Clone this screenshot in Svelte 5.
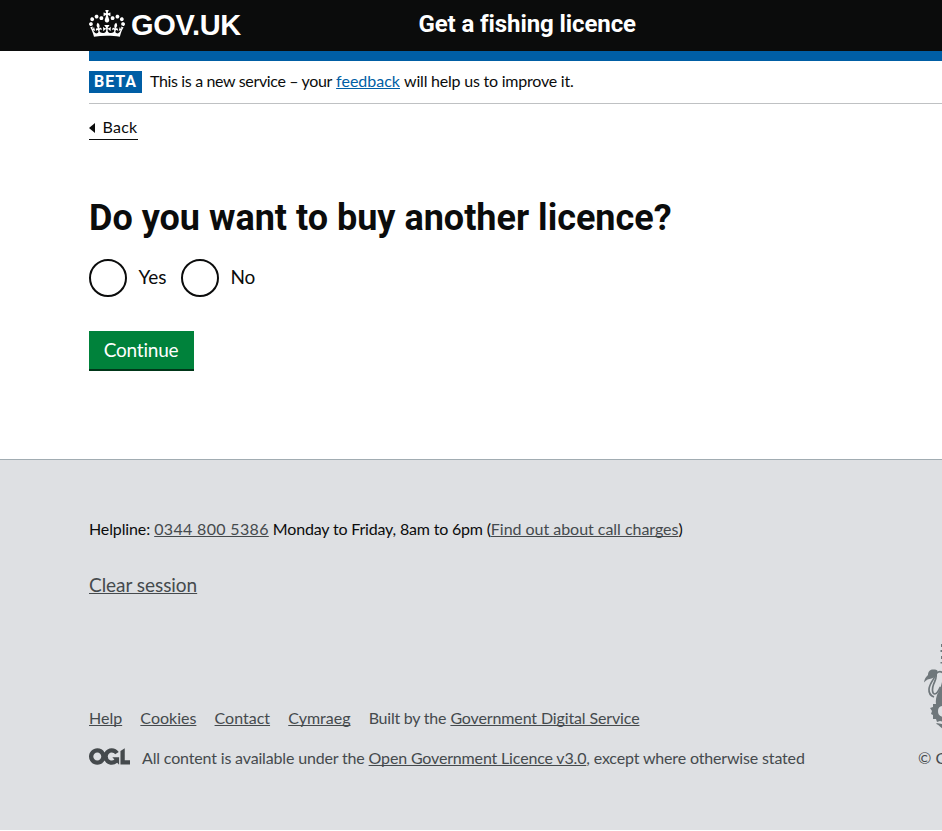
<script>
  const options = [
    { value: 'yes', label: 'Yes' },
    { value: 'no', label: 'No' }
  ];
  const links = [
    { name: 'help', label: 'Help' },
    { name: 'cookies', label: 'Cookies' },
    { name: 'contact', label: 'Contact' },
    { name: 'cymraeg', label: 'Cymraeg' }
  ];
</script>

<div class="page">
  <header>
    <a class="logo" href="#home">
      <svg class="crown" viewBox="0 0 132 97" width="36" height="27" preserveAspectRatio="none" aria-hidden="true">
        <path fill="currentColor" fill-rule="evenodd" d="M25 30.2c3.5 1.5 7.7-.2 9.1-3.7 1.5-3.6-.2-7.8-3.9-9.2-3.6-1.4-7.6.3-9.1 3.9-1.4 3.5.3 7.5 3.9 9zM9 39.5c3.6 1.5 7.8-.2 9.2-3.7 1.5-3.6-.2-7.8-3.9-9.1-3.6-1.5-7.6.2-9.1 3.8-1.4 3.5.3 7.5 3.8 9zM4.4 57.2c3.5 1.5 7.7-.2 9.1-3.8 1.5-3.6-.2-7.7-3.9-9.1-3.5-1.5-7.6.3-9.1 3.8-1.4 3.5.3 7.6 3.9 9.1zm38.3-21.4c3.5 1.5 7.7-.2 9.1-3.8 1.5-3.6-.2-7.7-3.9-9.1-3.6-1.5-7.6.3-9.1 3.8-1.3 3.6.4 7.7 3.9 9.1zm64.4-5.6c-3.6 1.5-7.8-.2-9.1-3.7-1.5-3.6.2-7.8 3.8-9.2 3.6-1.4 7.7.3 9.2 3.9 1.3 3.5-.4 7.5-3.9 9zm15.9 9.3c-3.6 1.5-7.7-.2-9.1-3.7-1.5-3.6.2-7.8 3.7-9.1 3.6-1.5 7.7.2 9.2 3.8 1.5 3.5-.3 7.5-3.8 9zm4.7 17.7c-3.6 1.5-7.8-.2-9.2-3.8-1.5-3.6.2-7.7 3.9-9.1 3.6-1.5 7.7.3 9.2 3.8 1.3 3.5-.4 7.6-3.9 9.1zM89.3 35.8c-3.6 1.5-7.8-.2-9.2-3.8-1.4-3.6.2-7.7 3.9-9.1 3.6-1.5 7.7.3 9.2 3.8 1.4 3.6-.3 7.7-3.9 9.1zM69.7 17.7l8.9 4.7V9.3l-8.9 2.8c-.2-.3-.5-.6-.9-.9L72.4 0H59.6l3.5 11.2c-.3.3-.6.5-.9.9l-8.8-2.8v13.1l8.8-4.7c.3.3.6.7.9.9l-5 15.4v.1c-.2.8-.4 1.6-.4 2.4 0 4.1 3.1 7.5 7 8.1h.2c.3 0 .7.1 1 .1.4 0 .7 0 1-.1h.2c4-.6 7.1-4.1 7.1-8.1 0-.8-.1-1.7-.4-2.4V34l-5.1-15.4c.4-.2.7-.6 1-.9zM66 92.8c16.9 0 32.8 1.1 47.1 3.2 4-16.9 8.9-26.7 14-33.5l-9.6-3.4c1 4.9 1.1 7.2 0 10.2-1.5-1.4-3-4.3-4.2-8.7L108.6 76c2.8-2 5-3.2 7.5-3.3-4.4 9.4-10 11.9-13.6 11.2-4.3-.8-6.3-4.6-5.6-7.9 1-4.7 5.7-5.9 8-.5 4.3-8.7-3-11.4-7.6-8.8 7.1-7.2 7.9-13.5 2.1-21.1-8 6.1-8.1 12.3-4.5 20.8-4.7-5.4-12.1-2.5-9.5 6.2 3.4-5.2 7.9-2 7.2 3.1-.6 4.3-6.4 7.8-13.5 7.2-10.3-.9-10.9-8-11.2-13.8 2.5-.5 7.1 1.8 11 7.3L80.2 60c-4.1 4.4-8 5.3-12.3 5.4 1.4-4.4 8-11.6 8-11.6H55.5s6.4 7.2 7.9 11.6c-4.2-.1-8-1-12.3-5.4l1.4 16.4c3.9-5.5 8.5-7.7 10.9-7.3-.3 5.8-.9 12.8-11.1 13.8-7.2.6-12.9-2.9-13.5-7.2-.7-5 3.8-8.3 7.1-3.1 2.7-8.7-4.6-11.6-9.4-6.2 3.7-8.5 3.6-14.7-4.6-20.8-5.8 7.6-5 13.9 2.2 21.1-4.7-2.6-11.9.1-7.7 8.8 2.3-5.5 7.1-4.2 8.1.5.7 3.3-1.3 7.1-5.7 7.9-3.5.7-9-1.8-13.5-11.2 2.5.1 4.7 1.3 7.5 3.3l-4.7-15.4c-1.2 4.4-2.7 7.2-4.3 8.7-1.1-3-.9-5.3 0-10.2l-9.5 3.4c5 6.9 9.9 16.7 14 33.5 14.8-2.1 30.8-3.2 47.7-3.2z" />
      </svg>
      <span class="wordmark">GOV.UK</span>
    </a>
    <a class="service" href="#service">Get a fishing licence</a>
  </header>

  <div class="container">
    <div class="bar"></div>
    <div class="phase">
      <strong class="tag">BETA</strong>
      <p><span class="lead">This is a new service – your</span>{' '}<a href="#feedback">feedback</a>{' '}<span class="tail">will help us to improve it.</span></p>
    </div>

    <a class="back" href="#back">
      <svg width="6" height="10" viewBox="0 0 6 10" aria-hidden="true"><path d="M0 5 6 0v10z" fill="currentColor" /></svg>
      <span>Back</span>
    </a>

    <main>
      <h1>Do you want to buy another licence?</h1>
      <div class="radios">
        {#each options as option}
          <label class={option.value}>
            <input type="radio" name="another" value={option.value} />
            <span>{option.label}</span>
          </label>
        {/each}
      </div>
      <button type="button">Continue</button>
    </main>
  </div>

  <footer>
    <div class="inner">
      <p class="helpline"><span class="intro">Helpline:</span>{' '}<a class="phone" href="#phone">0344 800 5386</a>{' '}<span class="hours">Monday to Friday, 8am to 6pm (</span><a class="charges" href="#charges">Find out about call charges</a>)</p>
      <p class="clear"><a href="#clear">Clear session</a></p>
      <div class="meta">
        <div>
          <div class="links">
            {#each links as link}
              <a class={link.name} href="#{link.name}">{link.label}</a>
            {/each}
            <p><span class="built">Built by the</span>{' '}<a class="gds" href="#gds">Government Digital Service</a></p>
          </div>
          <div class="licence">
            <svg width="41" height="17" viewBox="0 0 483.2 195.7" aria-hidden="true">
              <path fill="currentColor" d="M421.5 142.8V.1l-50.7 32.3v161.1h112.4v-50.7zm-122.3-9.6A47.12 47.12 0 0 1 221 97.8c0-26 21.1-47.1 47.1-47.1 16.7 0 31.4 8.7 39.7 21.8l42.7-27.2A97.63 97.63 0 0 0 268.1 0c-36.5 0-68.3 20.1-85.1 49.7A98 98 0 0 0 97.8 0C43.9 0 0 43.9 0 97.8s43.9 97.8 97.8 97.8c36.5 0 68.3-20.1 85.1-49.7a97.76 97.76 0 0 0 149.6 25.4l19.4 22.2h3v-87.8h-80l24.3 27.5zM97.8 145c-26 0-47.1-21.1-47.1-47.1s21.1-47.1 47.1-47.1 47.1 21.1 47.1 47.1S123.8 145 97.8 145" />
            </svg>
            <p>All content is available under the <a href="#ogl">Open Government Licence v3.0</a>, except where otherwise stated</p>
          </div>
        </div>
        <div class="copyright">
          <svg width="24" height="90" viewBox="0 0 24 90" aria-hidden="true">
            <g fill="#6f777b">
              <path d="M17 2h3v3h-3zM16.5 8h3v2h-3zM17 14h3v3h-3zM16.5 20h3v1.5h-3z" />
              <path d="M0 40.5c.5-4 2-5.500 4-7.500 0-3 1.500-5.500 5-5.500 3 0 5 .5 4.500 2.500-.5 3-2.500 5.500-6 6.500-3 .5-5 1-7.500 4z" />
              <path d="M24 36l-6 4c-1 5-3 9-5 13-1 3-1.500 6-1 9l-3 0 0 3-3 1 2 3-1 3 2 1v4l3 0 1 3 3-1 8 2v-6h-5c-4-1-5-3-5-6 0-3 2-5 5-5h5z" />
              <path d="M12.500 81l6 1v4.500c-2-1-3-3-6-4.500z" />
            </g>
            <g fill="none" stroke="#6f777b" stroke-width="1.700">
              <path d="M12 30c1 5-6 9-7 17-.3 4 1 6.500 5 8" />
              <path d="M18.500 30.500c-3-2-6 0-6.500 2 1 3-1 6-2.500 10-1.500 4-1.500 9 1 9.500 3 0 4-4 6-7" />
            </g>
          </svg>
          <span>© Crown copyright</span>
        </div>
      </div>
    </div>
  </footer>
</div>

<style>
  :global(body) { margin: 0; background: #fff; overflow: hidden; }
  .page {
    width: 100%;
    height: 830px;
    overflow: hidden;
    color: #0b0c0c;
    font: 16px/20px Lato, "Noto Sans", sans-serif;
    font-variant-ligatures: none;
  }
  p, h1 { margin: 0; }
  p, a, span { white-space: pre; }
  a { text-decoration-thickness: 1px; text-underline-offset: 1px; text-decoration-skip-ink: none; }

  header {
    display: flex;
    align-items: flex-start;
    box-sizing: border-box;
    height: 51px;
    padding: 9px 0 0 89px;
    background: #0b0c0c;
    color: #fff;
  }
  header a { color: inherit; text-decoration: none; }
  .logo { display: flex; width: 329.5px; }
  .crown { margin-top: 1px; }
  .wordmark { margin: 1px 0 0 6px; font: 700 29px/30px "Liberation Sans", Arial, sans-serif; letter-spacing: -0.3px; }
  .service { font: 700 24px/30px Roboto, sans-serif; letter-spacing: -0.1px; }

  .container { height: 408px; margin-left: 89px; }
  .bar { height: 10px; background: #005ea5; }
  .phase {
    display: flex;
    align-items: center;
    height: 42px;
    border-bottom: 1px solid #bfc1c3;
  }
  .tag {
    width: 53px;
    height: 22px;
    margin-right: 8px;
    background: #005ea5;
    color: #fff;
    font: 700 16px/22px Roboto, sans-serif;
    letter-spacing: 0.9px;
    text-align: center;
  }
  .phase p { margin-top: -2px; color: #0b0c0c; }
  .phase a { color: #005ea5; }
  .lead { letter-spacing: -0.35px; }
  .tail { letter-spacing: -0.22px; }

  .back {
    display: inline-flex;
    align-items: center;
    gap: 8px;
    width: 49px;
    height: 21px;
    margin-top: 14px;
    border-bottom: 1px solid #0b0c0c;
    color: #0b0c0c;
    text-decoration: none;
    letter-spacing: 0.25px;
  }
  .back svg { flex: none; margin-top: -1px; }
  .back span { margin: -3px 0 0 -0.5px; }

  h1 { margin-top: 58px; font: 700 36px/40px Roboto, sans-serif; letter-spacing: 0; }
  .radios { display: flex; margin-top: 21px; font-size: 19px; line-height: 38px; }
  label { display: flex; width: 92px; }
  label span { margin: -1px 0 0 11.5px; }
  .no span { letter-spacing: -0.3px; }
  input {
    appearance: none;
    box-sizing: border-box;
    flex: none;
    width: 38px;
    height: 38px;
    margin: 0;
    border: 2px solid #0b0c0c;
    border-radius: 50%;
    background: #fff;
  }
  button {
    display: block;
    width: 105px;
    height: 38px;
    margin: 34px 0 0;
    padding: 0 1px 0 0;
    border: 0;
    background: #00823b;
    box-shadow: 0 2px 0 #003618;
    color: #fff;
    font: 19px/38px Lato, sans-serif;
    letter-spacing: -0.2px;
  }

  footer {
    box-sizing: border-box;
    height: 371px;
    padding: 59px 0 0 89px;
    border-top: 1px solid #a1acb2;
    background: #dee0e3;
    color: #454a4d;
  }
  footer a { color: inherit; }
  .helpline { color: #0b0c0c; }
  .helpline a { color: #454a4d; }
  .intro { letter-spacing: -0.12px; }
  .phone { letter-spacing: 0.33px; }
  .hours { letter-spacing: -0.18px; }
  .charges { letter-spacing: -0.03px; }
  .clear { margin-top: 33px; font-size: 19px; line-height: 25px; letter-spacing: -0.04px; }
  .meta { display: flex; align-items: flex-end; margin-top: 45px; }
  .links { display: flex; gap: 18.2px; }
  .built { letter-spacing: -0.23px; }
  .gds { letter-spacing: -0.13px; }
  .licence { display: flex; gap: 12px; width: 829px; margin-top: 20px; letter-spacing: -0.16px; }
  .licence svg { flex: none; }
  .copyright { display: flex; flex-direction: column; }
  .copyright svg { margin: 0 0 16px 6px; }
</style>
